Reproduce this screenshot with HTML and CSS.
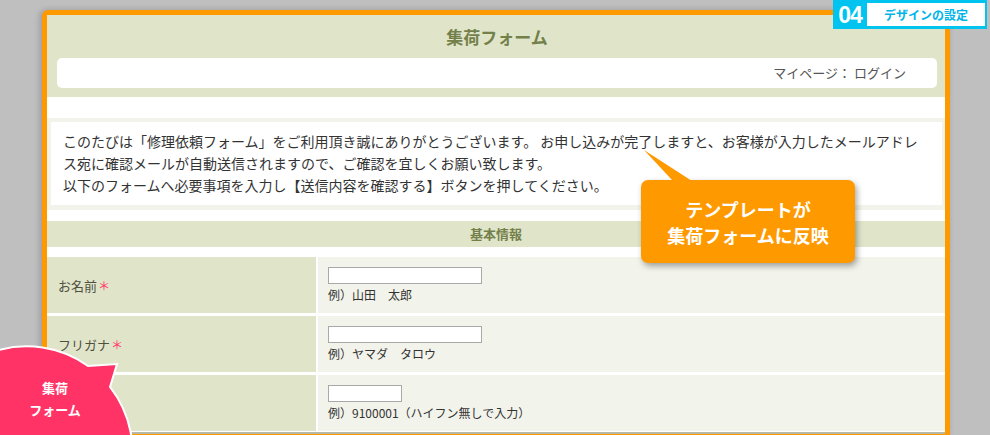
FILE: index.html
```html
<!DOCTYPE html>
<html lang="ja">
<head>
    <meta charset="UTF-8">
    <meta name="viewport" content="width=device-width, initial-scale=1.0">
    <title>集荷フォーム</title>
    <link rel="stylesheet" href="styles.css">
</head>
<body>
    <div class="frame">
        <div class="header">
            <h1>集荷フォーム</h1>
            <div class="mypage">マイページ：&nbsp;ログイン</div>
        </div>

        <div class="intro">
            <p>このたびは「修理依頼フォーム」をご利用頂き誠にありがとうございます。 お申し込みが完了しますと、お客様が入力したメールアドレス宛に確認メールが自動送信されますので、ご確認を宜しくお願い致します。<br>以下のフォームへ必要事項を入力し【送信内容を確認する】ボタンを押してください。</p>
        </div>

        <h2 class="section">基本情報</h2>

        <div class="form-table">
            <div class="label">お名前<span class="req">＊</span></div>
            <div class="field">
                <input type="text" class="input-wide">
                <div class="hint">例）山田　太郎</div>
            </div>
            <div class="label">フリガナ<span class="req">＊</span></div>
            <div class="field">
                <input type="text" class="input-wide">
                <div class="hint">例）ヤマダ　タロウ</div>
            </div>
            <div class="label"></div>
            <div class="field">
                <input type="text" class="input-short">
                <div class="hint">例）9100001（ハイフン無しで入力）</div>
            </div>
        </div>
    </div>

    <!-- overlays -->
    <div class="badge">
        <span class="badge-num">04</span>
        <span class="badge-text">デザインの設定</span>
    </div>

    <div class="callout">
        <svg class="callout-tail" width="60" height="36" viewBox="0 0 60 36">
            <polygon points="2,0 31,31 50,31" fill="#ff9900"/>
        </svg>
        テンプレートが<br>集荷フォームに反映
    </div>

    <div class="bubble">
        <svg width="140" height="115" viewBox="0 0 140 115">
            <path d="M 110 67 L 117 44 L 88 46 A 106 106 0 1 0 110 67 Z" fill="#ff3366" stroke="#fff" stroke-width="2"/>
        </svg>
        <div class="bubble-text">集荷<br>フォーム</div>
    </div>
</body>
</html>
```

FILE: styles.css
```css
body {
    margin: 0;
    background: #bfbfbf;
    font-family: "Noto Sans CJK JP", "Noto Sans", sans-serif;
    color: #333;
    height: 435px;
    overflow: hidden;
    position: relative;
}
.frame {
    margin: 10px 0 0 42px;
    width: 898px;
    border: 5px solid #ff9900;
    border-radius: 6px 6px 0 0;
    background: #fff;
    box-shadow: -2px 0 6px rgba(0, 0, 0, 0.2);
}
.header {
    background: #e0e5ca;
    padding: 0 8px 9px 10px;
}
h1 {
    margin: 0;
    height: 43px;
    line-height: 43px;
    text-align: center;
    font-size: 17px;
    color: #74804a;
}
.mypage {
    background: #fff;
    border-radius: 5px;
    height: 30px;
    line-height: 30px;
    text-align: right;
    padding-right: 31px;
    font-size: 13px;
    color: #555;
}
.intro {
    margin-top: 21px;
    background: #f2f3ea;
    padding: 4px 3px 5px 4px;
}
.intro p {
    margin: 0;
    background: #fff;
    padding: 8px 14px 9px 12px;
    font-size: 14px;
    line-height: 22px;
}
.section {
    margin: 11px 0 10px;
    background: #e0e5ca;
    height: 26px;
    line-height: 26px;
    text-align: center;
    font-size: 13px;
    color: #74804a;
}
.form-table {
    display: grid;
    grid-template-columns: 269px 1fr;
    column-gap: 2px;
    row-gap: 3px;
    border-bottom: 2px solid #b8b8a8;
    padding-bottom: 1px;
}
.label {
    background: #e0e5ca;
    height: 56px;
    display: flex;
    align-items: center;
    padding-left: 11px;
    font-size: 13px;
    color: #4f4f3f;
}
.req {
    color: #ff3366;
    font-size: 12px;
    margin-left: 1px;
}
.field {
    background: #f2f3ea;
    padding: 10px 10px 0;
}
.field input {
    display: block;
    box-sizing: border-box;
    height: 17px;
    margin: 0;
    border: 1px solid #a9a9a9;
    background: #fff;
}
.input-wide {
    width: 154px;
}
.input-short {
    width: 74px;
}
.hint {
    font-size: 12px;
    line-height: 20px;
    margin-top: 1px;
    color: #333;
}
.badge {
    position: absolute;
    top: 0;
    right: 3px;
    width: 154px;
    height: 29px;
    background: #00c3f0;
    display: flex;
    align-items: center;
}
.badge-num {
    width: 34px;
    line-height: 26px;
    text-align: center;
    color: #fff;
    font-family: "Liberation Sans", Arial, sans-serif;
    font-weight: bold;
    font-size: 23px;
    letter-spacing: -1px;
}
.badge-text {
    flex: 1;
    margin-right: 2px;
    height: 23px;
    line-height: 23px;
    background: #fff;
    color: #00b4e8;
    font-weight: bold;
    font-size: 12px;
    text-align: center;
}
.callout {
    position: absolute;
    left: 641px;
    top: 180px;
    width: 214px;
    height: 83px;
    box-sizing: border-box;
    padding-top: 16px;
    background: #ff9900;
    border-radius: 7px;
    box-shadow: 2px 3px 6px rgba(0, 0, 0, 0.35);
    color: #fff;
    font-weight: bold;
    font-size: 18px;
    line-height: 26px;
    text-align: center;
}
.callout-tail {
    position: absolute;
    left: 1px;
    top: -30px;
}
.bubble {
    position: absolute;
    left: 0;
    top: 320px;
}
.bubble svg {
    display: block;
}
.bubble-text {
    position: absolute;
    left: 21px;
    top: 57px;
    width: 68px;
    text-align: center;
    color: #fff;
    font-weight: bold;
    font-size: 13px;
    line-height: 22px;
}
```
